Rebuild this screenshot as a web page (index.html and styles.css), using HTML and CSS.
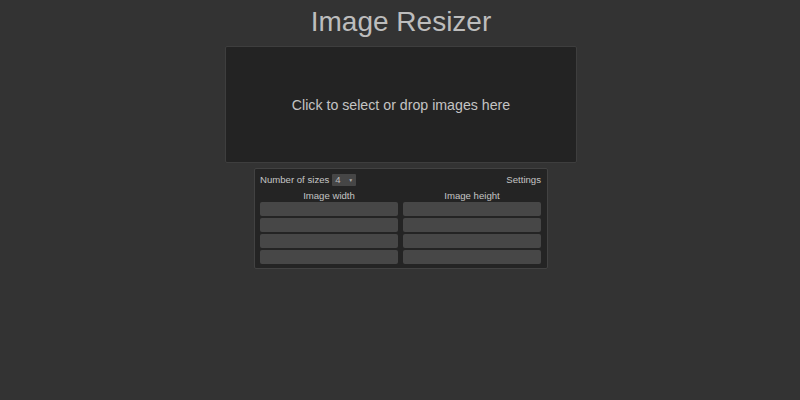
FILE: index.html
```html
<!DOCTYPE html>
<html lang="en">
<head>
<meta charset="utf-8">
<title>Image Resizer</title>
<link rel="stylesheet" href="styles.css">
</head>
<body>
  <h1 class="title">Image Resizer</h1>
  <div class="dropzone">Click to select or drop images here</div>
  <div class="panel">
    <div class="panel-top">
      <div class="count">
        <span>Number of sizes</span>
        <span class="select">4<span class="arrow">&#9660;</span></span>
      </div>
      <span class="settings">Settings</span>
    </div>
    <div class="grid">
      <div class="head">Image width</div>
      <div class="head">Image height</div>
      <div class="input"></div><div class="input"></div>
      <div class="input"></div><div class="input"></div>
      <div class="input"></div><div class="input"></div>
      <div class="input"></div><div class="input"></div>
    </div>
  </div>
</body>
</html>
```
FILE: styles.css
```css
html, body {
  margin: 0;
  padding: 0;
  background: #333333;
  font-family: "Liberation Sans", Arial, sans-serif;
  color: #c4c4c4;
}
body {
  display: flex;
  flex-direction: column;
  align-items: center;
  padding-left: 2px;
}
.title {
  margin: 6px 0 8px;
  font-size: 28px;
  line-height: 32px;
  font-weight: normal;
  color: #bdbdbd;
}
.dropzone {
  box-sizing: border-box;
  width: 352px;
  height: 117px;
  background: #232323;
  border: 1px solid #3e3e3e;
  border-radius: 2px;
  display: flex;
  align-items: center;
  justify-content: center;
  font-size: 14.2px;
  color: #c4c4c4;
}
.panel {
  box-sizing: border-box;
  margin-top: 5px;
  width: 294px;
  background: #242424;
  border: 1px solid #424242;
  border-radius: 2px;
  padding: 5px 6px 4px 5px;
  font-size: 9.6px;
}
.panel-top {
  display: flex;
  justify-content: space-between;
  align-items: center;
  height: 11px;
}
.count {
  display: flex;
  align-items: center;
  gap: 3px;
}
.select {
  display: inline-flex;
  align-items: center;
  justify-content: space-between;
  box-sizing: border-box;
  width: 24px;
  height: 12px;
  background: #464646;
  padding: 0 3px 0 3px;
  color: #bdbdbd;
  border-radius: 1px;
}
.arrow {
  font-size: 5px;
  color: #aaaaaa;
}
.settings {
  color: #c4c4c4;
}
.grid {
  display: grid;
  grid-template-columns: 1fr 1fr;
  column-gap: 5px;
  row-gap: 2px;
  margin-top: 1px;
}
.head {
  text-align: center;
  height: 14px;
  line-height: 20px;
}
.input {
  height: 14px;
  background: #474747;
  border-radius: 2px;
}
```
